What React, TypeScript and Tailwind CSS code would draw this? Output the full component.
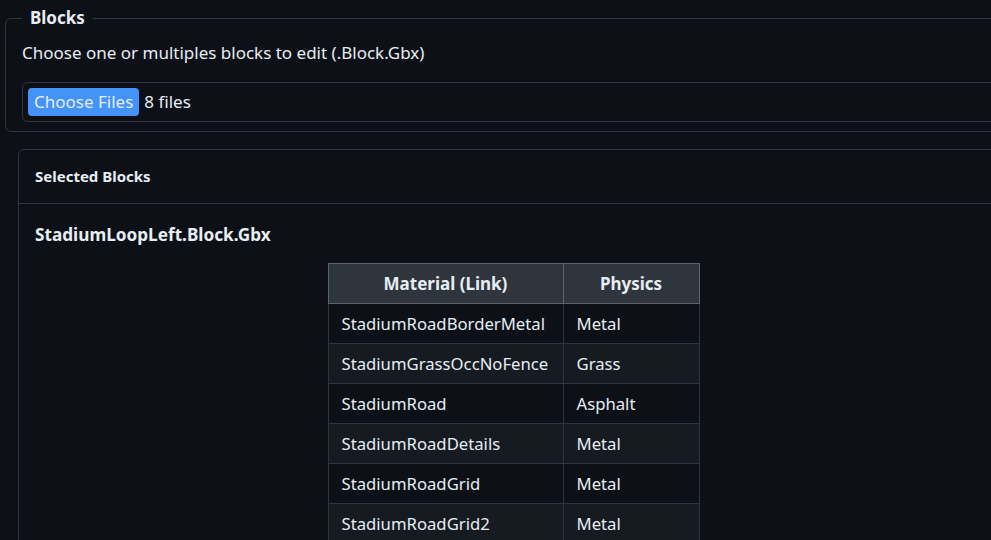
import React from "react";

const rows: [string, string][] = [
  ["StadiumRoadBorderMetal", "Metal"],
  ["StadiumGrassOccNoFence", "Grass"],
  ["StadiumRoad", "Asphalt"],
  ["StadiumRoadDetails", "Metal"],
  ["StadiumRoadGrid", "Metal"],
  ["StadiumRoadGrid2", "Metal"],
];

export default function App() {
  return (
    <div className="w-[991px] h-[540px] overflow-hidden bg-[#0d1117] text-[#e6edf3] font-['Noto_Sans',sans-serif]">
      <div className="w-[1030px] pt-[7px]">
        <fieldset className="ml-[5px] w-[1010px] border border-[#30363d] rounded-[6px] pl-[16px] pr-[16px] pb-[9px]">
          <legend className="ml-0 px-[8px] text-[17px] font-bold leading-[22px]">Blocks</legend>
          <p className="text-[17px] leading-[24px] mt-[12px]">Choose one or multiples blocks to edit (.Block.Gbx)</p>
          <div className="mt-[17px] h-[40px] border border-[#30363d] rounded-[6px] flex items-center pl-[5px]">
            <span className="h-[28px] px-[6px] flex items-center rounded-[4px] bg-[#4493f8] text-[#e6edf3] text-[17px]">Choose Files</span>
            <span className="ml-[5px] text-[17px]">8 files</span>
          </div>
        </fieldset>
        <div className="ml-[18px] mt-[17px] w-[991px] border border-[#30363d] rounded-[6px]">
          <div className="h-[54px] flex items-center px-[16px] border-b border-[#30363d] text-[15px] font-bold">Selected Blocks</div>
          <div className="px-[16px] pt-[19px] pb-[16px]">
            <div className="text-[17.2px] font-bold leading-[24px]">StadiumLoopLeft.Block.Gbx</div>
            <table className="mx-auto mt-[16px] border-collapse text-[16.7px]">
              <thead>
                <tr className="bg-[#2f353d]">
                  <th className="w-[235px] h-[40px] border border-[#5c636b] font-bold text-center text-[17px]">Material (Link)</th>
                  <th className="w-[136px] h-[40px] border border-[#5c636b] font-bold text-center text-[17px]">Physics</th>
                </tr>
              </thead>
              <tbody>
                {rows.map(([m, p], i) => (
                  <tr key={m} className={i % 2 === 1 ? "bg-[#161b22]" : "bg-[#0d1117]"}>
                    <td className="h-[40px] border border-[#30363d] pl-[13px]">{m}</td>
                    <td className="h-[40px] border border-[#30363d] pl-[13px]">{p}</td>
                  </tr>
                ))}
              </tbody>
            </table>
          </div>
        </div>
      </div>
    </div>
  );
}
